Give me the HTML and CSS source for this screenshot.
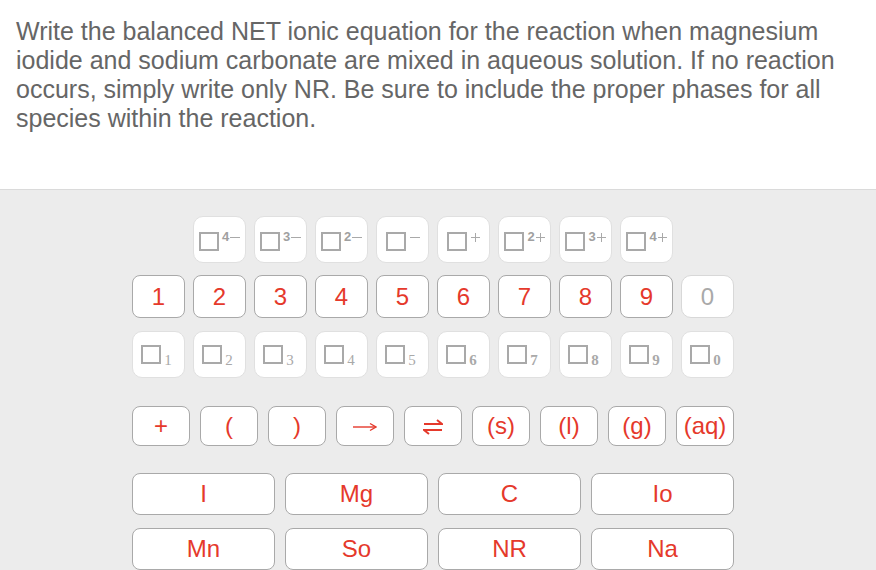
FILE: index.html
```html
<!DOCTYPE html>
<html>
<head>
<meta charset="utf-8">
<link rel="stylesheet" href="styles.css">
</head>
<body>
<div class="question">Write the balanced NET ionic equation for the reaction when magnesium iodide and sodium carbonate are mixed in aqueous solution. If no reaction occurs, simply write only NR. Be sure to include the proper phases for all species within the reaction.</div>
<div class="panel">
  <div class="row row-charge">
    <div class="key soft"><span class="ph"></span><span class="sup"><b>4</b><i class="minus"></i></span></div>
    <div class="key soft"><span class="ph"></span><span class="sup"><b>3</b><i class="minus"></i></span></div>
    <div class="key soft"><span class="ph"></span><span class="sup"><b>2</b><i class="minus"></i></span></div>
    <div class="key soft"><span class="ph"></span><span class="sup"><i class="minus"></i></span></div>
    <div class="key soft"><span class="ph"></span><span class="sup"><i class="plus"></i></span></div>
    <div class="key soft"><span class="ph"></span><span class="sup"><b>2</b><i class="plus"></i></span></div>
    <div class="key soft"><span class="ph"></span><span class="sup"><b>3</b><i class="plus"></i></span></div>
    <div class="key soft"><span class="ph"></span><span class="sup"><b>4</b><i class="plus"></i></span></div>
  </div>
  <div class="row row-num">
    <div class="key hard">1</div>
    <div class="key hard">2</div>
    <div class="key hard">3</div>
    <div class="key hard">4</div>
    <div class="key hard">5</div>
    <div class="key hard">6</div>
    <div class="key hard">7</div>
    <div class="key hard">8</div>
    <div class="key hard">9</div>
    <div class="key soft off">0</div>
  </div>
  <div class="row row-sub">
    <div class="key soft"><span class="ph"></span><span class="sub">1</span></div>
    <div class="key soft"><span class="ph"></span><span class="sub">2</span></div>
    <div class="key soft"><span class="ph"></span><span class="sub">3</span></div>
    <div class="key soft"><span class="ph"></span><span class="sub">4</span></div>
    <div class="key soft"><span class="ph"></span><span class="sub">5</span></div>
    <div class="key soft"><span class="ph"></span><span class="sub bold">6</span></div>
    <div class="key soft"><span class="ph"></span><span class="sub bold">7</span></div>
    <div class="key soft"><span class="ph"></span><span class="sub bold">8</span></div>
    <div class="key soft"><span class="ph"></span><span class="sub bold">9</span></div>
    <div class="key soft"><span class="ph"></span><span class="sub bold">0</span></div>
  </div>
  <div class="row row-sym">
    <div class="key hard">+</div>
    <div class="key hard">(</div>
    <div class="key hard">)</div>
    <div class="key hard"><svg class="arr" width="24" height="10" viewBox="0 0 24 10"><path d="M0 5 H22.5" stroke="#e5392b" stroke-width="1.4" fill="none"/><path d="M17 1.5 L23 5 L17 8.5" stroke="#e5392b" stroke-width="1.4" fill="none"/></svg></div>
    <div class="key hard"><svg class="eq" width="20" height="16" viewBox="0 0 20 16"><path d="M1 5 H19 L14 1" stroke="#e5392b" stroke-width="2" fill="none"/><path d="M19 11 H1 L6 15" stroke="#e5392b" stroke-width="2" fill="none"/></svg></div>
    <div class="key hard">(s)</div>
    <div class="key hard">(l)</div>
    <div class="key hard">(g)</div>
    <div class="key hard">(aq)</div>
  </div>
  <div class="row row-el first">
    <div class="key hard">I</div>
    <div class="key hard">Mg</div>
    <div class="key hard">C</div>
    <div class="key hard">Io</div>
  </div>
  <div class="row row-el">
    <div class="key hard">Mn</div>
    <div class="key hard">So</div>
    <div class="key hard">NR</div>
    <div class="key hard">Na</div>
  </div>
</div>
</body>
</html>
```
FILE: styles.css
```css
html, body {
  margin: 0;
  padding: 0;
  height: 100%;
  overflow: hidden;
  background: #ffffff;
  font-family: "Liberation Sans", Arial, sans-serif;
}

body {
  display: flex;
  flex-direction: column;
}

.question {
  flex: none;
  padding: 17px 16px 0 16px;
  height: 189px;
  box-sizing: border-box;
  font-size: 25px;
  line-height: 29px;
  color: #666666;
}

.panel {
  flex: 1;
  background: #ececec;
  border-top: 1px solid #dadada;
  display: flex;
  flex-direction: column;
  align-items: center;
  padding-top: 26px;
  padding-right: 10px;
}

.row {
  display: flex;
  gap: 8px;
  flex: none;
}

.key {
  box-sizing: border-box;
  background: #ffffff;
  display: flex;
  align-items: center;
  justify-content: center;
  color: #e5392b;
  font-size: 24px;
  line-height: 24px;
}

.key.soft {
  border: 1px solid #e0e0e0;
  border-radius: 10px;
}

.key.hard {
  border: 1px solid #a9a9a9;
  border-radius: 8px;
}

.ph {
  display: block;
  flex: none;
  width: 20px;
  height: 19px;
  box-sizing: border-box;
  border: 2px solid #a9a9a9;
}

.row-charge .key {
  width: 53px;
  height: 47px;
  align-items: flex-start;
  padding-top: 15px;
}

.sup {
  display: flex;
  align-items: center;
  height: 10px;
  margin-top: 0;
  margin-left: 3px;
  color: #a0a0a0;
}

.sup b {
  font-size: 13px;
  line-height: 10px;
  font-weight: bold;
}

.minus {
  display: block;
  width: 10px;
  height: 1px;
  background: #a9a9a9;
  margin-left: 1px;
}

.plus {
  display: block;
  position: relative;
  width: 9px;
  height: 9px;
  margin-left: 1px;
}

.plus::before,
.plus::after {
  content: "";
  position: absolute;
  background: #a9a9a9;
}

.plus::before {
  left: 0;
  top: 4px;
  width: 9px;
  height: 1px;
}

.plus::after {
  left: 4px;
  top: 0;
  width: 1px;
  height: 9px;
}

.row-num {
  margin-top: 12px;
}

.row-num .key {
  width: 53px;
  height: 43px;
}

.key.off {
  color: #a9a9a9;
  border-color: #d8d8d8;
}

.row-sub {
  margin-top: 13px;
}

.row-sub .key {
  width: 53px;
  height: 47px;
  align-items: flex-start;
  padding-top: 13px;
  padding-right: 4px;
}

.sub {
  font-family: "Liberation Serif", "Times New Roman", serif;
  font-size: 15px;
  line-height: 14px;
  color: #a9a9a9;
  margin-top: 8px;
  margin-left: 3px;
}

.sub.bold {
  font-weight: bold;
}

.row-sym {
  margin-top: 28px;
  gap: 10px;
}

.row-sym .key {
  width: 58px;
  height: 40px;
}

.arr {
  margin-top: 2px;
}

.eq {
  margin-top: 1px;
}

.row-el {
  gap: 10px;
  margin-top: 13px;
}

.row-el.first {
  margin-top: 27px;
}

.row-el .key {
  width: 143px;
  height: 42px;
}
```
